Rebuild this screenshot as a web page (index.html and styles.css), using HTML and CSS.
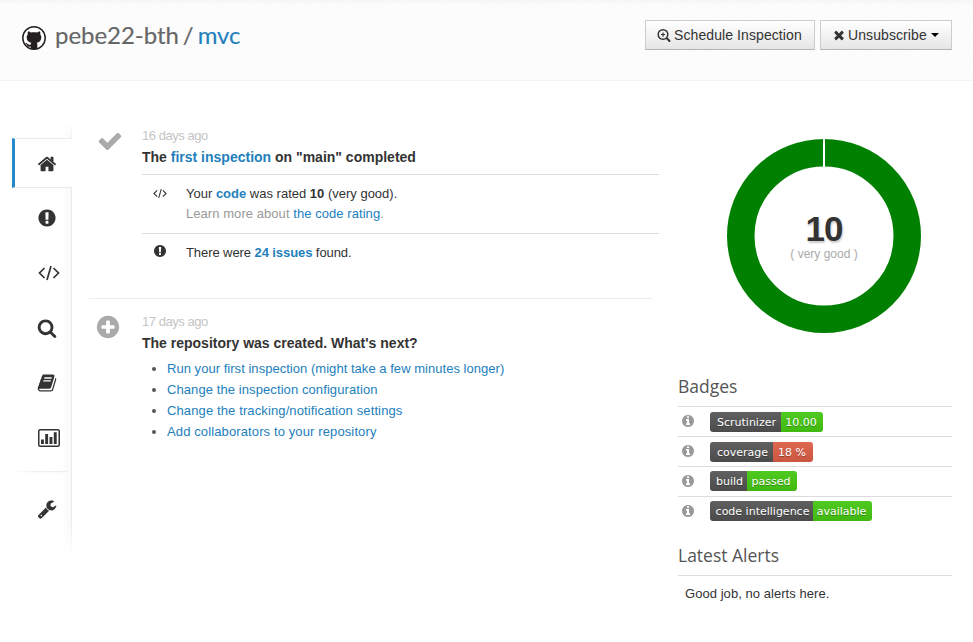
FILE: index.html
```
<!DOCTYPE html>
<html lang="en">
<head>
<meta charset="utf-8">
<title>pebe22-bth / mvc</title>
<link rel="stylesheet" href="styles.css">
</head>
<body>
<svg class="sprite" aria-hidden="true">
  <symbol id="home" viewBox="0 0 1792 1792"><path d="M1472 992v480q0 26-19 45t-45 19h-384v-384h-256v384h-384q-26 0-45-19t-19-45v-480q0-1 .5-3t.5-3l575-474 575 474q1 2 1 6zm223-69l-62 74q-8 9-21 11h-3q-13 0-21-7l-692-577-692 577q-12 8-24 7-13-2-21-11l-62-74q-8-10-7-23.5t11-21.5l719-599q32-26 76-26t76 26l244 204v-195q0-14 9-23t23-9h192q14 0 23 9t9 23v408l219 182q10 8 11 21.5t-7 23.5z"/></symbol>
  <symbol id="alert" viewBox="0 0 1792 1792"><path d="M896 128q209 0 385.5 103t279.5 279.5 103 385.5-103 385.5-279.5 279.5-385.5 103-385.5-103-279.5-279.5-103-385.5 103-385.5 279.5-279.5 385.5-103zm128 1247v-190q0-14-9-23.5t-22-9.5h-192q-13 0-23 10t-10 23v190q0 13 10 23t23 10h192q13 0 22-9.5t9-23.5zm-2-344l18-621q0-12-10-18-10-8-24-8h-220q-14 0-24 8-10 6-10 18l17 621q0 10 10 17.5t24 7.5h185q14 0 23.5-7.5t10.5-17.5z"/></symbol>
  <symbol id="code" viewBox="0 0 22 16"><path d="M6.5 3 1.5 8l5 5M15.500 3l5 5-5 5M13 1 9 15" fill="none" stroke="currentColor" stroke-width="1.700"/></symbol>
  <symbol id="search" viewBox="0 0 1792 1792"><path d="M1216 832q0-185-131.5-316.5t-316.5-131.5-316.5 131.500-131.500 316.500 131.500 316.500 316.500 131.500 316.500-131.500 131.500-316.500zm512 832q0 52-38 90t-90 38q-54 0-90-38l-343-342q-179 124-399 124-143 0-273.500-55.500t-225-150-150-225-55.500-273.500 55.500-273.500 150-225 225-150 273.500-55.500 273.500 55.500 225 150 150 225 55.500 273.500q0 220-124 399l343 343q37 37 37 90z"/></symbol>
  <symbol id="search-plus" viewBox="0 0 1792 1792"><path fill-rule="evenodd" d="M1290 832q0-216-153-369t-369-153-369 153-153 369 153 369 369 153 369-153 153-369zm438 832q0 52-38 90t-90 38q-54 0-90-38l-343-342q-179 124-399 124-143 0-273.500-55.500t-225-150-150-225-55.500-273.500 55.500-273.500 150-225 225-150 273.500-55.500 273.500 55.500 225 150 150 225 55.500 273.500q0 220-124 399l343 343q37 37 37 90z"/><path d="M768 560v544M496 832h544" stroke="currentColor" stroke-width="150"/></symbol>
  <symbol id="plus" viewBox="0 0 1792 1792"><path d="M1344 960v-128q0-26-19-45t-45-19h-256v-256q0-26-19-45t-45-19h-128q-26 0-45 19t-19 45v256h-256q-26 0-45 19t-19 45v128q0 26 19 45t45 19h256v256q0 26 19 45t45 19h128q26 0 45-19t19-45v-256h256q26 0 45-19t19-45zm320-64q0 209-103 385.500t-279.500 279.500-385.500 103-385.500-103-279.500-279.500-103-385.500 103-385.500 279.500-279.500 385.500-103 385.500 103 279.500 279.500 103 385.500z"/></symbol>
  <symbol id="book" viewBox="0 0 1792 1792"><path d="M1703 478q40 57 18 129l-275 906q-19 64-76.5 107.500t-122.500 43.500h-923q-77 0-148.500-53.500t-99.500-131.500q-24-67-2-127 0-4 3-27t4-37q1-8-3-21.500t-3-19.500q2-11 8-21t16.500-23.500 16.500-23.500q23-38 45-91.500t30-91.500q3-10 .5-30t-.5-28q3-11 17-28t17-23q21-36 42-92t25-90q1-9-2.500-32t.5-28q4-13 22-30.500t22-22.500q19-26 42.500-84.500t27.500-96.500q1-8-3-25.500t-2-26.500q2-8 9-18t18-23 17-21q8-12 16.500-30.500t15-35 16-36 19.500-32 26.500-23.500 36-11.500 47.500 5.500l-1 3q38-9 51-9h761q74 0 114 56t18 130l-274 906q-36 119-71.500 153.500t-128.500 34.500h-869q-27 0-38 15-11 16-1 43 24 70 144 70h923q29 0 56-15.500t35-41.500l300-987q7-22 5-57 38 15 59 43zm-1064 2q-4 13 2 22.500t20 9.500h608q13 0 25.500-9.500t16.500-22.500l21-64q4-13-2-22.500t-20-9.500h-608q-13 0-25.500 9.500t-16.500 22.500zm-83 256q-4 13 2 22.500t20 9.500h608q13 0 25.500-9.500t16.500-22.500l21-64q4-13-2-22.500t-20-9.500h-608q-13 0-25.500 9.500t-16.500 22.500z"/></symbol>
  <symbol id="chart" viewBox="0 0 22 18"><rect x=".75" y=".75" width="20.500" height="16.500" rx="1.500" fill="none" stroke="currentColor" stroke-width="1.500"/><path d="M3 10.500h2.900V15H3zM7.200 5h2.900v10H7.200zM11.500 8h2.900v7h-2.900zM15.800 3.300h2.900V15h-2.900z"/></symbol>
  <symbol id="wrench" viewBox="0 0 1792 1792"><path d="M448 1472q0-26-19-45t-45-19-45 19-19 45 19 45 45 19 45-19 19-45zm644-420l-682 682q-37 37-90 37-52 0-91-37l-106-108q-38-36-38-90 0-53 38-91l681-681q39 98 114.500 173.500t173.500 114.500zm634-435q0 39-23 106-47 134-164.500 217.500t-258.500 83.500q-185 0-316.500-131.500t-131.500-316.500 131.500-316.500 316.500-131.500q58 0 121.500 16.500t107.500 46.500q16 11 16 28t-16 28l-293 169v224l193 107q5-3 79-48.500t135.500-81 70.500-35.500q15 0 23.500 10t8.500 25z"/></symbol>
  <symbol id="check" viewBox="0 0 1792 1792"><path d="M1671 566q0 40-28 68l-724 724-136 136q-28 28-68 28t-68-28l-136-136-362-362q-28-28-28-68t28-68l136-136q28-28 68-28t68 28l294 295 656-657q28-28 68-28t68 28l136 136q28 28 28 68z"/></symbol>
  <symbol id="times" viewBox="0 0 1792 1792"><path d="M1490 1322q0 40-28 68l-136 136q-28 28-68 28t-68-28l-294-294-294 294q-28 28-68 28t-68-28l-136-136q-28-28-28-68t28-68l294-294-294-294q-28-28-28-68t28-68l136-136q28-28 68-28t68 28l294 294 294-294q28-28 68-28t68 28l136 136q28 28 28 68t-28 68l-294 294 294 294q28 28 28 68z"/></symbol>
  <symbol id="info" viewBox="0 0 1792 1792"><path d="M1152 1376v-160q0-14-9-23t-23-9h-96v-512q0-14-9-23t-23-9h-320q-14 0-23 9t-9 23v160q0 14 9 23t23 9h96v320h-96q-14 0-23 9t-9 23v160q0 14 9 23t23 9h448q14 0 23-9t9-23zm-128-896v-160q0-14-9-23t-23-9h-192q-14 0-23 9t-9 23v160q0 14 9 23t23 9h192q14 0 23-9t9-23zm640 416q0 209-103 385.500t-279.500 279.500-385.500 103-385.500-103-279.500-279.500-103-385.500 103-385.500 279.500-279.500 385.500-103 385.500 103 279.500 279.500 103 385.500z"/></symbol>
</svg>

<header class="top">
  <svg class="github" viewBox="0 0 24 24"><circle cx="12" cy="12" r="11.200" fill="#fff" stroke="#231f20" stroke-width="1.500"/><path fill="#231f20" d="M6 5.400c1.300 0 2.300.6 3 1.100 1.900-.4 4.100-.4 6 0 .7-.5 1.700-1.100 3-1.100.5 1.100.5 2.100.2 3 .9 1 1.200 2.100 1.100 3.400-.2 3-1.900 4.500-4.600 4.900.5.600.7 1.300.7 2.200v4.100c-2.100.6-4.700.6-6.800 0v-2.400c-2.300.4-3.200-.5-3.900-1.900-.3-.6-.7-1-1.200-1.300-.3-.3.200-.5.700-.4 1.600.4 1.900 2.400 4.400 1.700.1-.8.300-1.500.7-2-2.700-.4-4.400-1.900-4.600-4.900-.1-1.300.2-2.400 1.100-3.400-.3-.9-.3-1.900.2-3z"/></svg>
  <h1 class="title"><span class="owner">pebe22-bth</span><span class="slash">/</span><a class="repo">mvc</a></h1>
  <button class="btn schedule"><svg class="i14"><use href="#search-plus"/></svg><span>Schedule Inspection</span></button>
  <button class="btn unsub"><svg class="i14"><use href="#times"/></svg><span>Unsubscribe</span><i class="caret"></i></button>
</header>

<div class="page">
  <nav class="side">
    <a class="item active"><svg class="i20"><use href="#home"/></svg></a>
    <a class="item"><svg class="i20"><use href="#alert"/></svg></a>
    <a class="item"><svg class="wide code"><use href="#code"/></svg></a>
    <a class="item"><svg class="i20"><use href="#search"/></svg></a>
    <a class="item"><svg class="i20"><use href="#book"/></svg></a>
    <a class="item"><svg class="wide chart"><use href="#chart"/></svg></a>
    <hr class="rule">
    <a class="item last"><svg class="i20"><use href="#wrench"/></svg></a>
  </nav>

  <main class="feed">
    <article class="event first">
      <svg class="mark check"><use href="#check"/></svg>
      <div class="body">
        <p class="when">16 days ago</p>
        <h2 class="head h-first">The <a>first inspection</a> on "main" completed</h2>
        <div class="row rating"><svg class="small-code"><use href="#code"/></svg>
          <div><p class="rated">Your <a><b>code</b></a> was rated <b>10</b> (very good).</p><p class="learn">Learn more about <a>the code rating</a>.</p></div></div>
        <div class="row issues"><svg class="i14"><use href="#alert"/></svg><p class="found">There were <a><b>24 issues</b></a> found.</p></div>
      </div>
    </article>
    <article class="event second">
      <svg class="mark plus"><use href="#plus"/></svg>
      <div class="body">
        <p class="when">17 days ago</p>
        <h2 class="head h-second">The repository was created. What's next?</h2>
        <ul class="next">
          <li><a>Run your first inspection (might take a few minutes longer)</a></li>
          <li><a>Change the inspection configuration</a></li>
          <li><a>Change the tracking/notification settings</a></li>
          <li><a>Add collaborators to your repository</a></li>
        </ul>
      </div>
    </article>
  </main>

  <aside class="info">
    <div class="score">
      <svg class="donut" viewBox="0 0 194 194"><circle cx="97" cy="97" r="83.250" fill="none" stroke="#008000" stroke-width="27.500"/><path d="M97 0v29" stroke="#fff" stroke-width="2"/></svg>
      <div class="value"><strong>10</strong><span>( very good )</span></div>
    </div>
    <h3 class="section">Badges</h3>
    <div class="badges">
      <div class="line"><svg class="i14"><use href="#info"/></svg><span class="badge b1"><span>Scrutinizer</span><em>10.00</em></span></div>
      <div class="line"><svg class="i14"><use href="#info"/></svg><span class="badge b2"><span>coverage</span><em class="red">18 %</em></span></div>
      <div class="line up"><svg class="i14"><use href="#info"/></svg><span class="badge b3"><span>build</span><em>passed</em></span></div>
      <div class="line up"><svg class="i14"><use href="#info"/></svg><span class="badge b4"><span>code intelligence</span><em>available</em></span></div>
    </div>
    <h3 class="section alerts">Latest Alerts</h3>
    <p class="none">Good job, no alerts here.</p>
  </aside>
</div>
</body>
</html>
```
FILE: styles.css
```
* { box-sizing: border-box; }
body { margin: 0; background: #fff; color: #333; font: 13px/20px "Liberation Sans", Arial, sans-serif; height: 642px; overflow: hidden; }
p, h1, h2, h3, ul { margin: 0; padding: 0; }
a { color: #2380bd; text-decoration: none; }
svg { display: block; fill: currentColor; flex: none; }
.sprite { position: absolute; width: 0; height: 0; }
.i14 { width: 14px; height: 14px; }
.i20 { width: 20px; height: 20px; }

.top { height: 81px; display: flex; align-items: flex-start; padding: 20px 21px 0 22px; border-bottom: 1px solid #f3f3f3;
  background: linear-gradient(#f5f5f5, rgba(250,250,250,0) 5px), repeating-linear-gradient(135deg, #fdfdfd 0 2px, #fbfbfb 2px 4px); }
.github { width: 24px; height: 24px; margin-top: 6px; }
.title { flex: 1; display: flex; margin-left: 9px; font: 400 24px/30px Lato, sans-serif; color: #666; white-space: nowrap; -webkit-text-stroke: .15px currentColor; }
.owner { letter-spacing: -.05px; }
.slash { margin: 0 4px 0 4px; }
.repo { letter-spacing: -.1px; }
.btn { display: flex; align-items: center; height: 30px; padding: 0 0 0 11px; border: 1px solid #ccc; border-bottom-color: #b3b3b3; border-radius: 0;
  background: linear-gradient(#fff, #e6e6e6); color: #333; font: 14px/20px "Liberation Sans", Arial, sans-serif; white-space: nowrap; }
.btn span { margin-left: 3px; }
.schedule { width: 170px; letter-spacing: .09px; }
.unsub { width: 132px; margin-left: 5px; }
.unsub span { margin-left: 2px; letter-spacing: .09px; }
.caret { margin-left: 4px; border: 4px solid transparent; border-top-color: #000; border-bottom: 0; }

.page { display: flex; align-items: flex-start; }
.side { width: 60px; height: 477px; margin: 41px 0 0 12px; padding-top: 16px;
  background: linear-gradient(#fff, rgba(255,255,255,0) 20px, rgba(255,255,255,0) 400px, #fff 436px), linear-gradient(to right, #fff 49px, #f9f9f9 59px, #ebebeb 59px); }
.item { display: flex; align-items: center; height: 55px; padding-left: 25px; color: #333; }
.item.active { height: 50px; margin-bottom: 2px; padding: 2px 0 0 22px; border: solid #ebebeb; border-width: 1px 0; border-left: 3px solid #258acb; background: #fff; }
.code { width: 22px; height: 16px; margin: 1px 0 0 1px; }
.chart { width: 22px; height: 18px; margin-left: 1px; }
.rule { height: 4px; width: 55px; margin: 6px 0 0; border: 0; background: linear-gradient(to right, #fff, rgba(255,255,255,0) 30px), linear-gradient(#ededed 1px, #fafafa 1px, #fff); }
.item.last { margin-top: 6px; }

.feed { width: 570px; margin: 45px 0 0 17px; }
.event { display: flex; }
.first { width: 570px; height: 172px; }
.second { width: 563px; border-top: 1px solid #ececec; padding-top: 13px; }
.mark { color: #aaa; }
.check { width: 26px; height: 26px; margin: 2px 19px 0 8px; }
.plus { width: 26px; height: 26px; margin: 2px 21px 0 6px; }
.body { flex: 1; }
.when { height: 20px; color: #c4c4c4; letter-spacing: -.45px; }
.head { font-size: 14px; line-height: 22px; font-weight: 700; white-space: nowrap; }
.row { display: flex; margin-top: 6px; border-top: 1px solid #ddd; padding-top: 9px; }
.rating { height: 53px; margin-top: 6px; }
.issues { height: 40px; }
.small-code { width: 14px; height: 11px; margin: 4px 19px 0 11px; }
.issues .i14 { margin: 1px 19px 0 11px; }
.row p { white-space: nowrap; }
.learn { color: #999; letter-spacing: .06px; }
.found { letter-spacing: -.08px; }
.next { margin-top: 4px; padding-left: 25px; line-height: 21px; white-space: nowrap; letter-spacing: .035px; }
.next li:nth-child(2) { letter-spacing: .09px; }
.next li:nth-child(n+3) { letter-spacing: .12px; }
.next li::marker { color: #555; }

.info { width: 274px; margin: 58px 0 0 19px; }
.score { display: grid; justify-items: center; align-items: center; width: 194px; height: 194px; margin-left: 49px; }
.score > * { grid-area: 1 / 1; }
.donut { width: 194px; height: 194px; }
.value { text-align: center; }
.value strong { display: block; font-size: 35px; line-height: 35px; letter-spacing: -1px; text-shadow: 1px 2px 2px #ccc; }
.value span { display: block; margin-top: 1px; font-size: 12px; line-height: 14px; color: #aaa; }
.section { margin-top: 39px; height: 35px; font: 400 17.5px/28px "Open Sans", sans-serif; color: #555; border-bottom: 1px solid #ddd; }
.line { display: flex; height: 30px; padding: 5px 0 0 3px; border-bottom: 1px solid #ddd; }
.line:last-child { border: 0; }
.line .i14 { color: #999; margin: 2px 15px 0 0; }
.badge { display: flex; height: 20px; border-radius: 3px; overflow: hidden; color: #fff; font: 11px/22px "DejaVu Sans", Verdana, sans-serif; text-shadow: 0 1px 0 rgba(0,0,0,.3); white-space: nowrap; }
.badge span { padding-left: 2px; background: linear-gradient(#606060, #4b4b4b); text-align: center; }
.badge em { flex: 1; padding-right: 2px; font-style: normal; text-align: center; background: linear-gradient(#4fca20, #40b810); }
.badge .red { background: linear-gradient(#df6851, #c95640); }
.up .badge { margin-top: -1px; }
.b1 { width: 113px; } .b1 span { width: 71px; }
.b2 { width: 103px; } .b2 span { width: 63px; }
.b3 { width: 87px; } .b3 span { width: 37px; }
.b4 { width: 162px; } .b4 span { width: 103px; }
.alerts { margin-top: 14px; }
.none { padding: 8px 0 0 7px; letter-spacing: .05px; }
```
